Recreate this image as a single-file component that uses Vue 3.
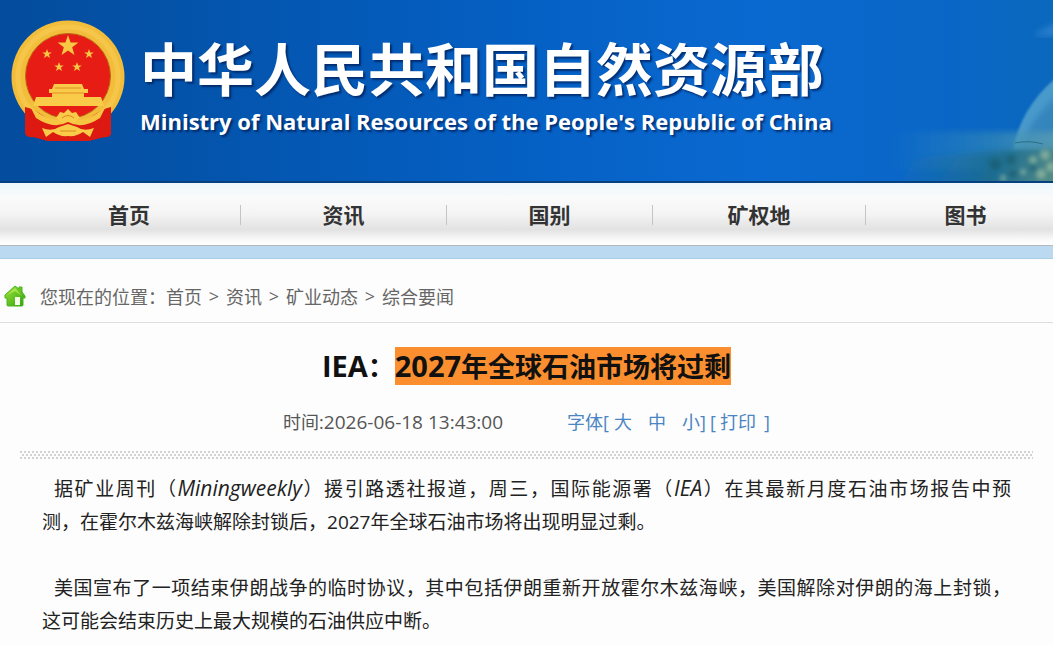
<template>
  <div class="page">
    <!-- 顶部横幅 -->
    <header class="banner">
      <svg class="banner-scene" viewBox="0 0 180 183" aria-hidden="true">
        <defs>
          <linearGradient id="haze" x1="0" y1="0" x2="1" y2="0">
            <stop offset="0" stop-color="#3f93b8" stop-opacity="0" />
            <stop offset="0.5" stop-color="#3a8fb4" stop-opacity="0.5" />
            <stop offset="1" stop-color="#5f9fb2" stop-opacity="0.9" />
          </linearGradient>
          <linearGradient id="land" x1="0" y1="0" x2="1" y2="0.2">
            <stop offset="0" stop-color="#1b6fa6" stop-opacity="0" />
            <stop offset="0.6" stop-color="#1d6c8c" stop-opacity="0.9" />
            <stop offset="1" stop-color="#5a8f84" />
          </linearGradient>
          <linearGradient id="globe" x1="0" y1="0" x2="0.3" y2="0.2">
            <stop offset="0" stop-color="#a5d5e8" />
            <stop offset="1" stop-color="#4a9acb" />
          </linearGradient>
          <filter id="soft"><feGaussianBlur stdDeviation="3" /></filter>
          <filter id="edge"><feGaussianBlur stdDeviation="1" /></filter>
          <filter id="spots"><feGaussianBlur stdDeviation="2" /></filter>
        </defs>
        <path d="M160 36 Q172 26 190 22 V36 Z" fill="#3d8dd5" opacity="0.6" filter="url(#soft)" />
        <path d="M140 150 Q148 104 190 72 V150 Z" fill="url(#globe)" filter="url(#edge)" />
        <path d="M149 148 Q156 114 200 84 V148 Z" fill="#3585bd" filter="url(#soft)" />
        <path d="M20 132 H200 V170 H20 Z" fill="url(#haze)" filter="url(#soft)" />
        <path d="M30 160 Q100 150 200 148 V200 H30 Z" fill="url(#land)" filter="url(#soft)" />
        <path d="M142 143 Q156 140 170 144" fill="none" stroke="#2b6f83" />
        <g fill="#a5c4a6" opacity="0.6" filter="url(#spots)">
          <circle cx="160" cy="160" r="4" />
          <circle cx="172" cy="155" r="5" />
          <circle cx="150" cy="172" r="3" />
          <circle cx="168" cy="174" r="5" />
          <circle cx="178" cy="167" r="5" />
          <circle cx="130" cy="178" r="3" />
        </g>
        <g fill="#155a6c" opacity="0.6" filter="url(#spots)">
          <circle cx="122" cy="164" r="6" />
          <circle cx="138" cy="160" r="5" />
          <circle cx="160" cy="168" r="3" />
          <circle cx="140" cy="174" r="4" />
        </g>
      </svg>
      <svg class="emblem" viewBox="0 0 116 124" role="img" aria-label="国徽">
        <path d="M16 82 H100 L99 112 Q101 119 94 118 L78 122 H38 L24 118 Q15 119 16 112 Z" fill="#d9190f" />
        <circle cx="58" cy="58" r="56.500" fill="#f3bd3c" />
        <circle cx="58" cy="58" r="50" fill="none" stroke="#f7cb50" stroke-width="5" opacity="0.7" />
        <circle cx="58" cy="57" r="42.500" fill="#e71c15" stroke="#bb6b16" />
        <path d="M15 88 Q24 90 32 96 Q44 106 58 102 Q72 106 84 96 Q92 90 101 88 L101 112 Q102 119 94 118 L78 122 H38 L24 118 Q14 119 15 112 Z" fill="#dd1a11" />
        <path d="M19 85 Q34 102 50 101 L58 97 L66 101 Q82 102 97 85 L90 99 Q72 111 58 103 Q44 111 26 99 Z" fill="#f6c642" />
        <path v-for="(d, i) in starPaths" :key="i" :d="d" fill="#f8c845" />
        <g fill="#f9cb48">
          <path d="M44 65 H72 L74 70 H78 V74 H74 V79 H42 V74 H39 V70 H42 Z" />
          <path d="M26 78 H91 L94 87 H23 Z" />
          <path d="M46 99 L50 93 L54 94 L58 90 L62 94 L66 93 L70 99 L65 103 H51 Z" />
          <path d="M32 109 Q42 113 49 108 L58 105 L67 108 Q74 113 84 109 L80 118 L73 113 Q66 118 58 117 Q50 118 43 113 L36 118 Z" />
        </g>
        <path d="M45 69 H71 M42 74 H74" stroke="#df8d24" fill="none" />
        <path d="M52 99 Q58 94 64 99 M50 112 H66" stroke="#d98920" fill="none" />
      </svg>
      <div class="site-name">
        <div class="site-name-cn">中华人民共和国自然资源部</div>
        <div class="site-name-en">Ministry of Natural Resources of the People's Republic of China</div>
      </div>
    </header>

    <!-- 主导航 -->
    <nav class="main-nav">
      <a v-for="item in navItems" :key="item" href="#" class="nav-item">{{ item }}</a>
    </nav>
    <div class="nav-strip"></div>

    <!-- 面包屑 -->
    <div class="breadcrumb">
      <svg class="home-icon" viewBox="0 0 22 22" aria-hidden="true">
        <defs>
          <linearGradient id="home" x1="0" y1="0" x2="1" y2="1">
            <stop offset="0" stop-color="#a4e639" />
            <stop offset="1" stop-color="#2b9f10" />
          </linearGradient>
        </defs>
        <path d="M11 1 L15 4 V2 H18 V7 L21 11 V13 H19 V20 Q19 21 18 21 H4 Q3 21 3 20 V13 H1 V10 Z" fill="url(#home)" stroke="#48b51e" />
        <path d="M11 3 L3 10 L11 6 L18 11 Z" fill="#bff05c" opacity="0.7" />
        <rect x="11" y="12" width="5" height="8" fill="#f4fde8" />
      </svg>
      <span>您现在的位置：</span>
      <template v-for="(crumb, index) in crumbs" :key="crumb">
        <span v-if="index > 0" class="crumb-sep">&gt;</span>
        <a href="#">{{ crumb }}</a>
      </template>
    </div>

    <!-- 正文 -->
    <main class="article">
      <h1 class="title">
        <span class="latin">IEA</span>：<mark><span class="latin">2027</span>年全球石油市场将过剩</mark>
      </h1>
      <div class="meta">
        <span>时间:<span class="time">2026-06-18 13:43:00</span></span>
        <div class="tools">
          <span>字体[</span>
          <button type="button" class="size-button">大</button>
          <button type="button" class="size-button">中</button>
          <button type="button" class="size-button">小</button>
          <span class="bracket">]</span>
          <span class="bracket">[</span>
          <button type="button" class="print-button">打印</button>
          <span>]</span>
        </div>
      </div>
      <div class="dots"></div>
      <div class="content">
        <p>据矿业周刊（<em>Miningweekly</em>）援引路透社报道，周三，国际能源署（<em>IEA</em>）在其最新月度石油市场报告中预<span class="phrase">测，在霍尔木兹海峡</span>解除封锁后，2027年全球石油市场将出现明显过剩。</p>
        <p>美国宣布了一项结束伊朗战争的临时协议，其中包括伊朗重新开放霍尔木兹海峡，美国解除对伊朗的海上封锁，<span class="phrase">这可能会</span>结束历史上最大规模的石油供应中断。</p>
      </div>
    </main>
  </div>
</template>

<script setup>
// 导航菜单
const navItems = ['首页', '资讯', '国别', '矿权地', '图书']

// 面包屑路径
const crumbs = ['首页', '资讯', '矿业动态', '综合要闻']

// 国徽上的五颗星
const stars = [
  { x: 58, y: 27, r: 11 },
  { x: 37, y: 35, r: 5 },
  { x: 79, y: 35, r: 5 },
  { x: 49, y: 48, r: 5 },
  { x: 67, y: 48, r: 5 }
]

// 生成五角星路径
const starPaths = stars.map(({ x, y, r }) => {
  const points = []
  for (let i = 0; i < 10; i++) {
    const radius = i % 2 === 0 ? r : r * 0.4
    const angle = (Math.PI / 5) * i - Math.PI / 2
    points.push(`${x + radius * Math.cos(angle)} ${y + radius * Math.sin(angle)}`)
  }
  return `M${points.join('L')}Z`
})
</script>

<style>
body {
  margin: 0;
  background-color: #fdfdfd;
}
</style>

<style scoped>
.page {
  font-family: "Open Sans", "Noto Sans CJK SC", sans-serif;
  color: #222;
}

a {
  color: inherit;
  text-decoration: none;
}

.banner {
  position: relative;
  display: flex;
  align-items: flex-start;
  gap: 14px;
  box-sizing: border-box;
  height: 183px;
  padding: 19px 10px 0;
  overflow: hidden;
  border-bottom: 2px solid #06407f;
  background: linear-gradient(90deg, #044c9c 0%, #0455ae 22%, #0560c4 50%, #0a69d0 72%, #0a66c6 90%, #0a68bd 100%);
}

.banner-scene {
  position: absolute;
  top: 0;
  right: 0;
  width: 180px;
  height: 183px;
}

.emblem {
  flex: none;
  width: 116px;
  height: 124px;
}

.site-name {
  position: relative;
  padding-top: 16px;
  color: #fff;
  font-weight: bold;
  white-space: nowrap;
  text-shadow: 2px 2px 2px rgba(0, 25, 80, 0.7);
}

.site-name-cn {
  font-size: 57px;
  line-height: 68px;
}

.site-name-en {
  font-size: 22px;
  line-height: 36px;
}

.main-nav {
  display: grid;
  grid-template-columns: 241fr 206fr 206fr 213fr 187fr;
  align-items: center;
  box-sizing: border-box;
  height: 62px;
  padding-top: 2px;
  background: linear-gradient(#eef7fc 0%, #fafafa 25%, #f4f4f4 50%, #e2e2e2 75%, #fafafa 92%, #fff 100%);
}

.nav-item {
  border-right: 1px solid #c4c4c4;
  color: #333;
  font-size: 21px;
  font-weight: bold;
  line-height: 20px;
  text-align: center;
}

.nav-item:first-child {
  padding-left: 18px;
}

.nav-item:last-child {
  padding-left: 12px;
  border-right: none;
}

.nav-strip {
  box-sizing: border-box;
  height: 14px;
  border-top: 1px solid #b5b8bc;
  border-bottom: 1px solid #a9cfe6;
  background-color: #bbd9f1;
}

.breadcrumb {
  display: flex;
  align-items: center;
  box-sizing: border-box;
  height: 64px;
  padding: 10px 4px 0;
  border-bottom: 1px solid #ddd;
  color: #666;
  font-size: 18px;
}

.home-icon {
  width: 22px;
  height: 22px;
  margin-right: 14px;
}

.crumb-sep {
  width: 24px;
  font-size: 18px;
  text-align: center;
}

.article {
  padding: 24px 20px 0;
}

.title {
  margin: 0;
  color: #111;
  font-size: 27px;
  line-height: 37px;
  text-align: center;
}

.title .latin {
  font-size: 29px;
}

.title mark {
  display: inline-block;
  background-color: #fb8f2f;
  color: #111;
}

.meta {
  display: flex;
  justify-content: center;
  gap: 64px;
  margin-top: 24px;
  color: #555;
  font-size: 18px;
  line-height: 26px;
}

.time {
  font-size: 19px;
}

.tools {
  display: flex;
  color: #4a85c4;
}

.tools button {
  padding: 0;
  border: none;
  background: none;
  color: inherit;
  font: inherit;
  cursor: pointer;
}

.size-button + .size-button {
  margin-left: 16px;
}

.tools .size-button:first-of-type {
  margin-left: 5px;
}

.bracket {
  width: 10px;
}

.tools .print-button {
  margin-right: 8px;
}

.dots {
  height: 9px;
  margin-top: 16px;
  background-image:
    radial-gradient(circle at 1px 1px, #d2d2d2 1px, transparent 1px),
    radial-gradient(circle at 3px 4px, #d2d2d2 1px, transparent 1px);
  background-size: 4px 6px;
}

.content {
  padding: 13px 22px 0;
  color: #222;
  font-size: 19px;
  line-height: 33px;
}

.content em {
  font-size: 21px;
  line-height: 20px;
}

.content p {
  margin: 0 0 33px;
  text-indent: 12px;
  text-align: justify;
}

.content p:last-child {
  margin-bottom: 0;
}

.phrase {
  white-space: nowrap;
}
</style>
